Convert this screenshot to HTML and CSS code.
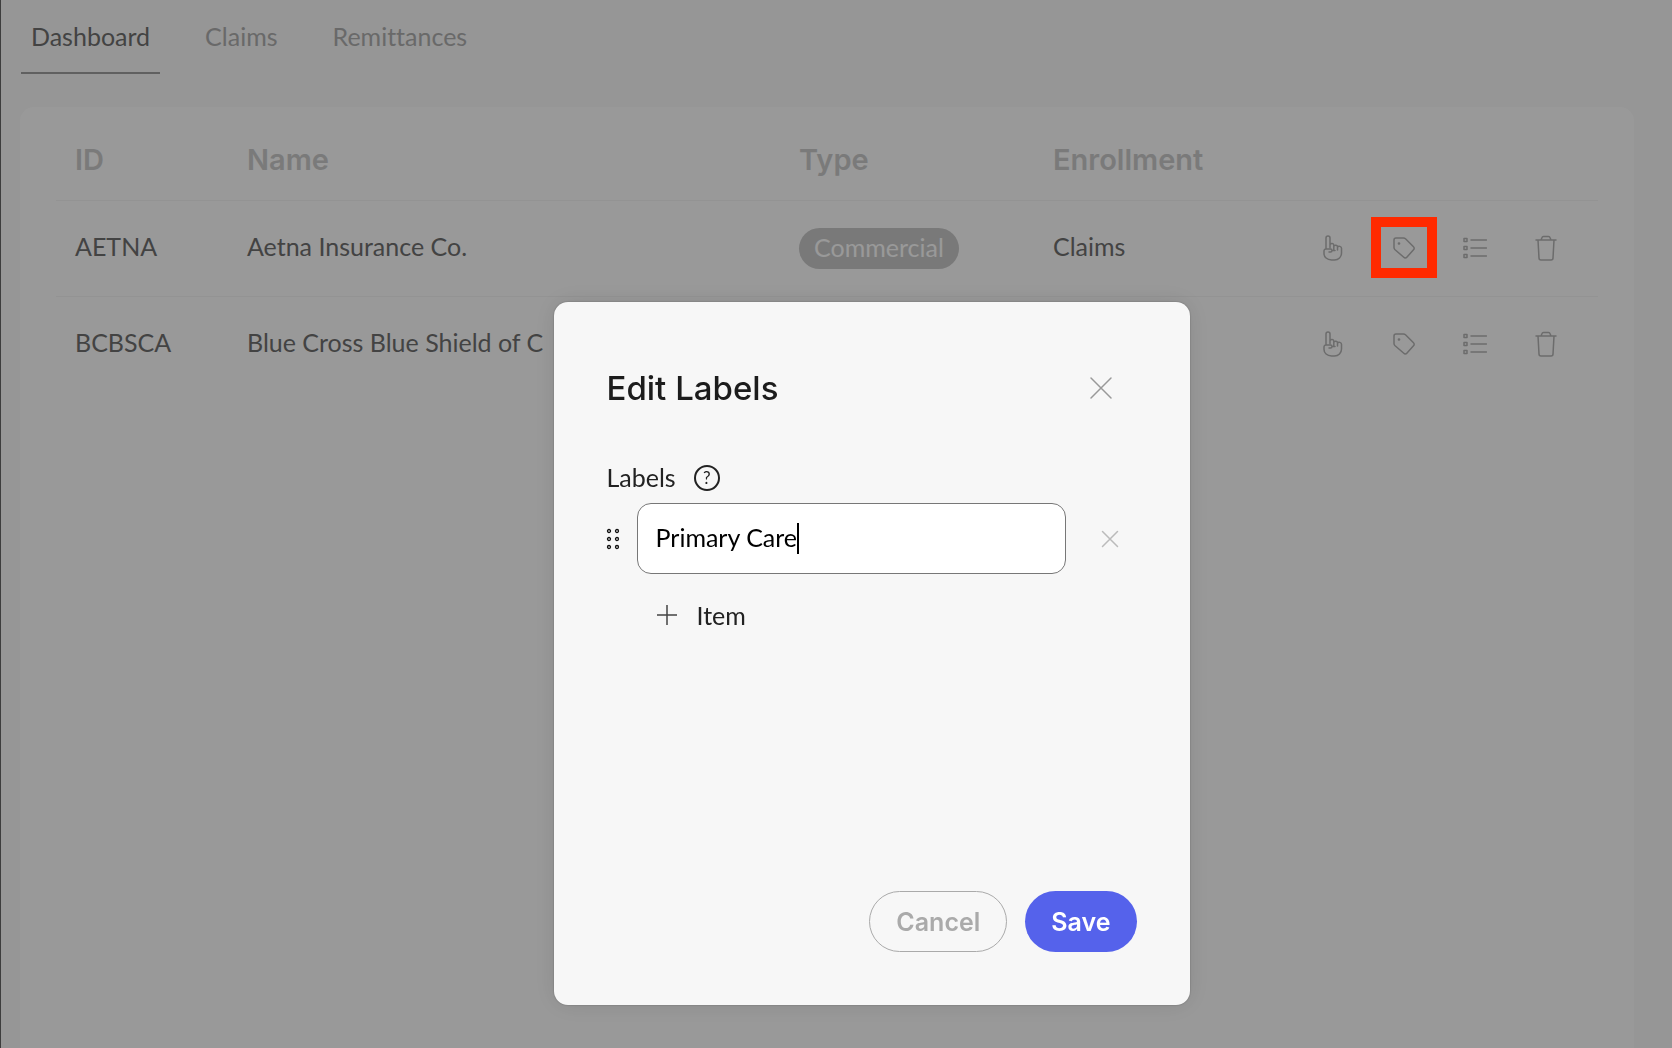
FILE: index.html
```html
<!DOCTYPE html>
<html lang="en">
<head>
<meta charset="utf-8">
<title>Payers</title>
<link rel="stylesheet" href="styles.css">
</head>
<body>
<svg class="sprite" aria-hidden="true">
  <symbol id="i-point" viewBox="0 0 20 26">
    <path d="M3 14V3a2 2 0 0 1 4 0v9.500M7 9.500c1-1.500 3.800-1.300 3.800.7v4.300M10.800 11c1-1.200 3.700-1 3.700.9v3M14.500 12c1-1.200 4-.9 4 1.300V18c0 4-3 7-7 7H8.500C4 25 1 22 1 18.500V16c0-1.200.8-2 2-2h4.500a1.500 1.500 0 0 1 1.500 1.500c0 1-.6 1.500-1.500 1.500H6M9 15.500h3"/>
  </symbol>
  <symbol id="i-tag" viewBox="0 0 24 24">
    <path d="M4 2h7.500a3 3 0 0 1 2 .8l8 8a2 2 0 0 1 0 3l-6.700 7.500a2 2 0 0 1-3 0L2.800 13.500a3 3 0 0 1-.8-2V4a2 2 0 0 1 2-2z"/>
    <circle cx="7" cy="7.500" r=".6"/>
  </symbol>
  <symbol id="i-list" viewBox="0 0 24 22">
    <path d="M1 1.500h3v3H1zM1 9.500h3v3H1zM1 17.500h3v3H1zM8 3h15.500M8 11h15.500M8 19h15.500"/>
  </symbol>
  <symbol id="i-trash" viewBox="0 0 22 26">
    <path d="M1 5h20M6 5l1-2.500a1.500 1.500 0 0 1 1.500-1h5a1.500 1.500 0 0 1 1.500 1L16 5M3 5l1 18a2 2 0 0 0 2 2h10a2 2 0 0 0 2-2l1-18"/>
  </symbol>
  <symbol id="i-close" viewBox="0 0 24 24">
    <path d="M2 2l20 20M22 2L2 22"/>
  </symbol>
</svg>

<nav class="tabs">
  <a class="tab tab-active" href="#dashboard">Dashboard</a>
  <a class="tab" href="#claims">Claims</a>
  <a class="tab" href="#remittances">Remittances</a>
</nav>

<main class="card">
  <table class="payers">
    <colgroup><col class="c-id"><col><col class="c-type"><col class="c-enroll"><col class="c-actions"></colgroup>
    <thead>
      <tr><th>ID</th><th>Name</th><th>Type</th><th>Enrollment</th><td></td></tr>
    </thead>
    <tbody>
      <tr>
        <td>AETNA</td>
        <td>Aetna Insurance Co.</td>
        <td class="badge-cell"><span class="badge">Commercial</span></td>
        <td>Claims</td>
        <td>
          <div class="actions">
            <button class="act" type="button" aria-label="Select"><svg class="ic-point"><use href="#i-point"/></svg></button>
            <button class="act" type="button" aria-label="Edit labels"><svg class="ic-tag"><use href="#i-tag"/></svg><span class="highlight"></span></button>
            <button class="act" type="button" aria-label="Details"><svg class="ic-list"><use href="#i-list"/></svg></button>
            <button class="act" type="button" aria-label="Delete"><svg class="ic-trash"><use href="#i-trash"/></svg></button>
          </div>
        </td>
      </tr>
      <tr>
        <td>BCBSCA</td>
        <td>Blue Cross Blue Shield of C</td>
        <td></td>
        <td></td>
        <td>
          <div class="actions">
            <button class="act" type="button" aria-label="Select"><svg class="ic-point"><use href="#i-point"/></svg></button>
            <button class="act" type="button" aria-label="Edit labels"><svg class="ic-tag"><use href="#i-tag"/></svg></button>
            <button class="act" type="button" aria-label="Details"><svg class="ic-list"><use href="#i-list"/></svg></button>
            <button class="act" type="button" aria-label="Delete"><svg class="ic-trash"><use href="#i-trash"/></svg></button>
          </div>
        </td>
      </tr>
    </tbody>
  </table>
</main>

<div class="overlay">
  <form class="modal" role="dialog" aria-labelledby="dialog-title">
    <header class="modal-head">
      <h2 id="dialog-title">Edit Labels</h2>
      <button class="close" type="button" aria-label="Close"><svg class="ic-close"><use href="#i-close"/></svg></button>
    </header>
    <div class="label-row">
      <label for="label-1">Labels</label>
      <button class="help" type="button">?</button>
    </div>
    <div class="item-row">
      <svg class="ic-drag" viewBox="0 0 12 20" aria-hidden="true">
        <circle cx="2" cy="2" r="1.500"/><circle cx="10" cy="2" r="1.500"/>
        <circle cx="2" cy="10" r="1.500"/><circle cx="10" cy="10" r="1.500"/>
        <circle cx="2" cy="18" r="1.500"/><circle cx="10" cy="18" r="1.500"/>
      </svg>
      <div class="field"><input id="label-1" type="text" value="Primary Care"><span class="caret"></span></div>
      <button class="remove" type="button" aria-label="Remove"><svg class="ic-remove"><use href="#i-close"/></svg></button>
    </div>
    <button class="add" type="button"><svg class="ic-plus" viewBox="0 0 20 20"><path d="M10 0v20M0 10h20"/></svg>Item</button>
    <footer class="modal-foot">
      <button class="btn btn-cancel" type="button">Cancel</button>
      <button class="btn btn-save" type="submit">Save</button>
    </footer>
  </form>
</div>
</body>
</html>
```

FILE: styles.css
```css
* { box-sizing: border-box; }

body {
  margin: 0;
  min-height: 100vh;
  display: flex;
  flex-direction: column;
  border-left: 1px solid #666;
  background: #fafafa;
  color: #707070;
  font: 25px/32px Lato, sans-serif;
  font-variant-ligatures: none;
}

button {
  border: 0;
  padding: 0;
  background: none;
  color: inherit;
  font: inherit;
  display: flex;
  align-items: center;
  justify-content: center;
}

svg {
  display: block;
  fill: none;
  stroke: currentColor;
  stroke-linecap: round;
  stroke-linejoin: round;
}

.sprite { position: absolute; width: 0; height: 0; }

.tabs { display: flex; gap: 35px; padding-left: 20px; }
.tab {
  padding: 20px 10px;
  border-bottom: 2px solid transparent;
  color: #b0b0b0;
  text-decoration: none;
}
.tab-active { color: #707070; border-bottom-color: #a0a0a0; }

.card {
  flex: 1;
  margin: 33px 38px 0 19px;
  padding: 0 36px;
  border-radius: 14px 14px 0 0;
  background: #fff;
}

.payers { width: 100%; table-layout: fixed; border-collapse: collapse; }
.payers th, .payers td { height: 96px; padding: 0 19px 4px; text-align: left; white-space: nowrap; }
.payers thead th, .payers thead td { height: 93px; padding: 14px 19px 0; }
.payers th { font-family: Inter, sans-serif; font-size: 29px; font-weight: 600; color: #ccc; }
.payers tr { border-bottom: 1px solid #f5f5f5; }
.payers tbody tr:last-child { border-bottom: 0; }
.payers td:last-child, .payers .badge-cell { padding-bottom: 0; }
.c-id { width: 172px; }
.c-type { width: 254px; }
.c-enroll { width: 253px; }
.c-actions { width: 311px; }

.badge {
  display: inline-block;
  padding: 3px 15px 6px;
  border-radius: 21px;
  background: #cacaca;
  color: #fff;
}

.actions { display: flex; justify-content: flex-end; gap: 35px; padding-right: 15px; }
.act { position: relative; width: 36px; height: 36px; color: #b4b4b4; stroke-width: 1.500; }
.ic-point { width: 20px; height: 26px; }
.ic-tag { width: 24px; height: 24px; }
.ic-list { width: 24px; height: 22px; }
.ic-trash { width: 22px; height: 26px; }

.highlight {
  position: absolute;
  inset: -13px -15px -12px;
  z-index: 2;
  border: 10px solid #ff2a00;
}

.overlay {
  position: fixed;
  inset: 0;
  z-index: 1;
  display: flex;
  justify-content: center;
  align-items: flex-start;
  padding: 302px 0 0 71px;
  background: rgba(0, 0, 0, .4);
}

.modal {
  display: flex;
  flex-direction: column;
  width: 636px;
  min-height: 703px;
  padding: 53px;
  border-radius: 14px;
  background: #f7f7f7;
  box-shadow: 0 0 24px rgba(0, 0, 0, .1), 0 0 2px rgba(0, 0, 0, .3);
  color: #222;
}

.modal-head { display: flex; align-items: center; justify-content: space-between; height: 66px; }
.modal-head h2 { margin: 0; font: 500 33px/40px Inter, sans-serif; color: #1c1c1c; }
.close { width: 40px; height: 40px; margin-right: 16px; color: #999; stroke-width: 1.500; }
.ic-close { width: 24px; height: 24px; }

.label-row { display: flex; align-items: center; gap: 18px; margin-top: 39px; height: 36px; }
.label-row label { padding-bottom: 2px; }
.help {
  width: 26px;
  height: 26px;
  border: 2px solid #222;
  border-radius: 50%;
  font-size: 17px;
  line-height: 20px;
}

.item-row { display: flex; align-items: center; margin-top: 7px; }
.ic-drag { width: 12px; height: 20px; stroke: #111; stroke-width: 1.300; overflow: visible; }
.field {
  flex: 1;
  display: flex;
  align-items: center;
  height: 71px;
  margin: 0 24px 0 18px;
  padding: 0 18px;
  border: 1px solid #777;
  border-radius: 14px;
  background: #fff;
}
.field input {
  field-sizing: content;
  border: 0;
  padding: 0 0 4px;
  outline: 0;
  background: none;
  font: inherit;
  color: #000;
}
.caret { width: 2px; height: 31px; background: #000; }
.remove { width: 40px; height: 40px; margin-right: 7px; color: #bbb; stroke-width: 2; }
.ic-remove { width: 18px; height: 18px; }

.add { align-self: flex-start; gap: 20px; margin: 25px 0 0 50px; }
.ic-plus { width: 20px; height: 20px; stroke-width: 1.500; stroke: #444; }

.modal-foot { display: flex; justify-content: flex-end; gap: 18px; margin-top: auto; }
.btn { height: 61px; border-radius: 31px; padding: 0 26px; font-family: Inter, sans-serif; font-weight: 600; }
.btn-cancel { border: 1px solid #aaa; color: #aaa; }
.btn-save { background: #5562eb; color: #fff; }
```
